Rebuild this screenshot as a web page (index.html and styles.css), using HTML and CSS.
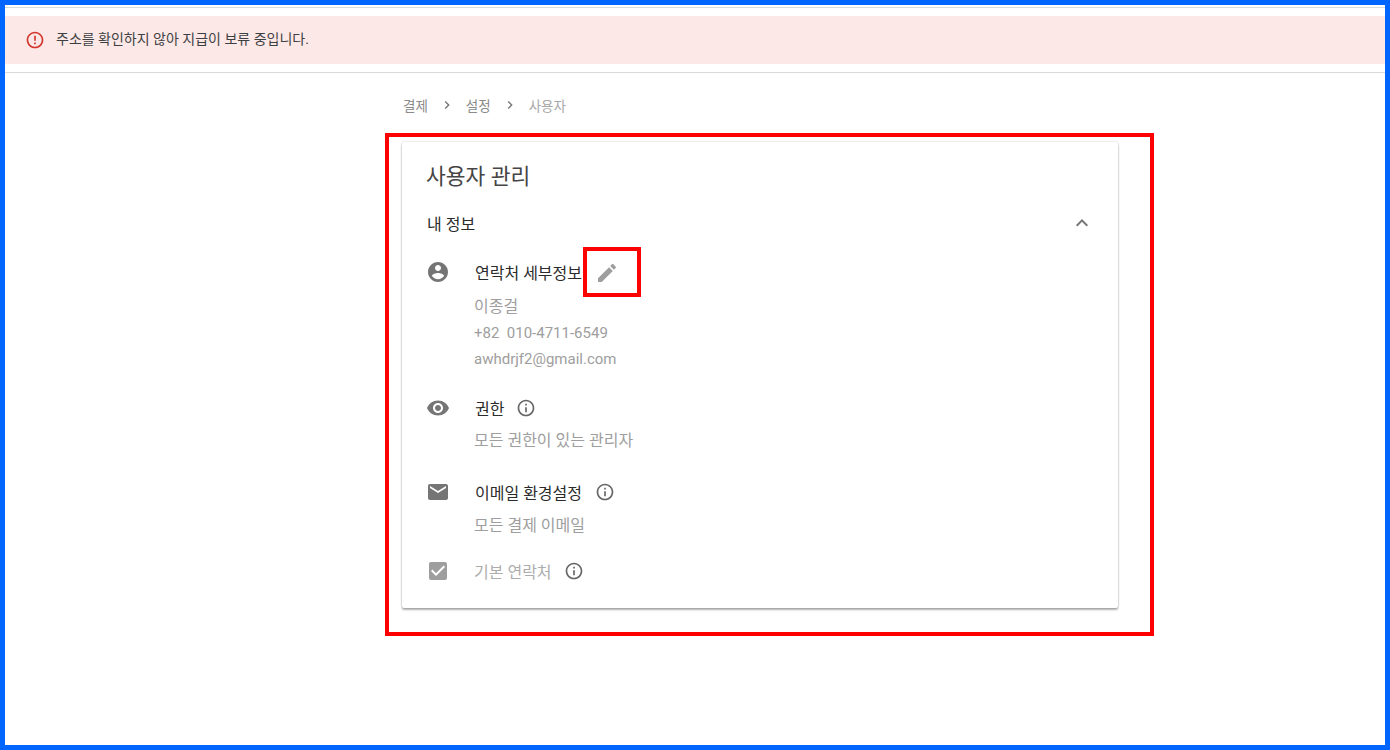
FILE: index.html
```html
<!DOCTYPE html>
<html lang="ko">
<head>
  <meta charset="UTF-8" />
  <title>사용자 관리</title>
  <link rel="stylesheet" href="styles.css">
</head>
<body>
  <div class="frame">
    <div class="top-line"></div>

    <div class="alert">
      <svg class="alert-icon" viewBox="0 0 24 24"><path d="M11 15h2v2h-2zm0-8h2v6h-2zm.99-5C6.47 2 2 6.48 2 12s4.47 10 9.99 10C17.52 22 22 17.52 22 12S17.52 2 11.99 2zM12 20c-4.42 0-8-3.58-8-8s3.58-8 8-8 8 3.58 8 8-3.58 8-8 8z"/></svg>
      <span class="alert-text">주소를 확인하지 않아 지급이 보류 중입니다.</span>
    </div>

    <div class="content">
      <div class="breadcrumb">
        <span>결제</span>
        <svg class="crumb-arrow" viewBox="0 0 24 24"><path d="M10 6L8.59 7.41 13.17 12l-4.58 4.59L10 18l6-6z"/></svg>
        <span>설정</span>
        <svg class="crumb-arrow" viewBox="0 0 24 24"><path d="M10 6L8.59 7.41 13.17 12l-4.58 4.59L10 18l6-6z"/></svg>
        <span class="crumb-last">사용자</span>
      </div>

      <div class="card">
        <h1 class="card-title">사용자 관리</h1>

        <div class="section-head">
          <span>내 정보</span>
          <svg class="icon" viewBox="0 0 24 24"><path d="M12 8l-6 6 1.41 1.41L12 10.83l4.59 4.58L18 14z"/></svg>
        </div>

        <div class="row row-contact">
          <svg class="icon row-icon" viewBox="0 0 24 24"><path d="M12 2C6.48 2 2 6.48 2 12s4.48 10 10 10 10-4.48 10-10S17.52 2 12 2zm0 3c1.66 0 3 1.34 3 3s-1.34 3-3 3-3-1.34-3-3 1.34-3 3-3zm0 14.2c-2.5 0-4.71-1.28-6-3.22.03-1.99 4-3.08 6-3.08 1.99 0 5.97 1.09 6 3.08-1.29 1.94-3.5 3.22-6 3.22z"/></svg>
          <div class="row-body">
            <div class="row-title">
              <span>연락처 세부정보</span>
              <svg class="icon edit-icon" viewBox="0 0 24 24"><path d="M3 17.25V21h3.75L17.81 9.94l-3.75-3.75L3 17.25zM20.71 7.04c.39-.39.39-1.02 0-1.41l-2.34-2.34c-.39-.39-1.02-.39-1.41 0l-1.83 1.83 3.75 3.75 1.83-1.83z"/></svg>
            </div>
            <div class="detail detail-first">이종걸</div>
            <div class="detail detail-latin">+82&nbsp; 010-4711-6549</div>
            <div class="detail detail-latin">awhdrjf2@gmail.com</div>
          </div>
        </div>

        <div class="row row-access">
          <svg class="icon row-icon" viewBox="0 0 24 24"><path d="M12 4.5C7 4.5 2.73 7.61 1 12c1.73 4.39 6 7.5 11 7.5s9.27-3.11 11-7.5c-1.73-4.39-6-7.5-11-7.5zM12 17c-2.76 0-5-2.24-5-5s2.24-5 5-5 5 2.24 5 5-2.24 5-5 5zm0-8c-1.66 0-3 1.34-3 3s1.34 3 3 3 3-1.34 3-3-1.34-3-3-3z"/></svg>
          <div class="row-body">
            <div class="row-title">
              <span>권한</span>
              <svg class="info-icon" viewBox="0 0 24 24"><path d="M11 17h2v-6h-2v6zm1-15C6.48 2 2 6.48 2 12s4.48 10 10 10 10-4.48 10-10S17.52 2 12 2zm0 18c-4.41 0-8-3.59-8-8s3.59-8 8-8 8 3.59 8 8-3.59 8-8 8zM11 9h2V7h-2v2z"/></svg>
            </div>
            <div class="detail detail-access">모든 권한이 있는 관리자</div>
          </div>
        </div>

        <div class="row row-mail">
          <svg class="icon row-icon" viewBox="0 0 24 24"><path d="M20 4H4c-1.1 0-1.99.9-1.99 2L2 18c0 1.1.9 2 2 2h16c1.1 0 2-.9 2-2V6c0-1.1-.9-2-2-2zm0 4l-8 5-8-5V6l8 5 8-5v2z"/></svg>
          <div class="row-body">
            <div class="row-title">
              <span>이메일 환경설정</span>
              <svg class="info-icon" viewBox="0 0 24 24"><path d="M11 17h2v-6h-2v6zm1-15C6.48 2 2 6.48 2 12s4.48 10 10 10 10-4.48 10-10S17.52 2 12 2zm0 18c-4.41 0-8-3.59-8-8s3.59-8 8-8 8 3.59 8 8-3.59 8-8 8zM11 9h2V7h-2v2z"/></svg>
            </div>
            <div class="detail detail-mail">모든 결제 이메일</div>
          </div>
        </div>

        <div class="row row-default">
          <svg class="icon row-icon check-icon" viewBox="0 0 24 24"><path d="M19 3H5c-1.11 0-2 .9-2 2v14c0 1.1.89 2 2 2h14c1.11 0 2-.9 2-2V5c0-1.1-.89-2-2-2zm-9 14l-5-5 1.41-1.41L10 14.17l7.59-7.59L19 8l-9 9z"/></svg>
          <div class="row-body">
            <div class="row-title row-title-off">
              <span>기본 연락처</span>
              <svg class="info-icon" viewBox="0 0 24 24"><path d="M11 17h2v-6h-2v6zm1-15C6.48 2 2 6.48 2 12s4.48 10 10 10 10-4.48 10-10S17.52 2 12 2zm0 18c-4.41 0-8-3.59-8-8s3.59-8 8-8 8 3.59 8 8-3.59 8-8 8zM11 9h2V7h-2v2z"/></svg>
            </div>
          </div>
        </div>
      </div>
    </div>

    <!-- 스크린샷 위에 표시한 빨간 박스 -->
    <div class="mark mark-card"></div>
    <div class="mark mark-edit"></div>
  </div>
</body>
</html>
```

FILE: styles.css
```css
* {
  box-sizing: border-box;
}

html, body {
  margin: 0;
  padding: 0;
  background: #fff;
}

body {
  font-family: Roboto, "Noto Sans CJK KR", sans-serif;
  font-size: 16px;
  color: #2b2b2b;
}

.frame {
  position: relative;
  width: 1390px;
  height: 750px;
  border: 5px solid #0066ff;
  overflow: hidden;
}

.top-line {
  height: 1px;
  margin-top: 2px;
  background: #dcdcdc;
}

.alert {
  display: flex;
  align-items: center;
  height: 48px;
  margin-top: 8px;
  padding-left: 20px;
  border-bottom-left-radius: 2px;
  background: #fce8e6;
  color: #3c4043;
  font-size: 14px;
}

.alert-icon {
  width: 20px;
  height: 20px;
  margin-right: 11px;
  fill: #d3362e;
}

.alert-text {
  margin-bottom: 5px;
}

.content {
  height: 674px;
  margin-top: 8px;
  padding: 22px 0 0 398px;
  border-top: 1px solid #dadada;
}

.breadcrumb {
  display: flex;
  align-items: center;
  height: 20px;
  color: #8a8a8a;
  font-size: 13.5px;
}

.crumb-arrow {
  width: 16px;
  height: 16px;
  margin: 0 11px;
  fill: #757575;
}

.crumb-last {
  color: #a8a8a8;
}

.card {
  width: 716px;
  height: 466px;
  margin: 27px 0 0 -1px;
  padding: 0 25px;
  border-radius: 2px;
  background: #fff;
  box-shadow: 0 2px 2px rgba(0, 0, 0, 0.3), 0 0 2px rgba(0, 0, 0, 0.25);
}

.card-title {
  margin: 0 0 0 -1px;
  padding-top: 21px;
  height: 64px;
  font-size: 21.5px;
  font-weight: 400;
  line-height: 28px;
  color: #454545;
}

.section-head {
  display: flex;
  align-items: center;
  justify-content: space-between;
  height: 34px;
}

.icon {
  width: 24px;
  height: 24px;
  fill: #757575;
  flex-shrink: 0;
}

.section-head .icon {
  margin-right: -1px;
}

.row {
  display: flex;
  align-items: flex-start;
}

.row-icon {
  margin: 0 25px 0 -1px;
}

.row-contact {
  margin-top: 20px;
}

.row-access {
  margin-top: 23px;
}

.row-mail {
  margin-top: 26px;
}

.row-default {
  margin-top: 19px;
}

.row-title {
  display: flex;
  align-items: center;
  height: 24px;
}

.row-title-off {
  margin-left: -1px;
  color: #adadad;
}

.edit-icon {
  margin: 1px 0 0 13px;
  fill: #9e9e9e;
}

.info-icon {
  width: 20px;
  height: 20px;
  margin-left: 12px;
  fill: #666;
}

.row-mail .info-icon {
  margin-left: 13px;
}

.detail {
  height: 26.5px;
  margin-left: -1px;
  line-height: 26.5px;
  color: #9e9e9e;
}

.detail-latin {
  font-size: 15px;
}

.detail-first {
  height: 25.5px;
  margin-top: 10px;
}

.detail-access {
  margin-top: 8px;
}

.detail-mail {
  margin-top: 9px;
}

.check-icon {
  fill: #9e9e9e;
}

.mark {
  position: absolute;
  border: 4px solid #ff0000;
}

.mark-card {
  left: 380px;
  top: 128px;
  width: 769px;
  height: 503px;
}

.mark-edit {
  left: 578px;
  top: 242px;
  width: 58px;
  height: 50px;
}
```
